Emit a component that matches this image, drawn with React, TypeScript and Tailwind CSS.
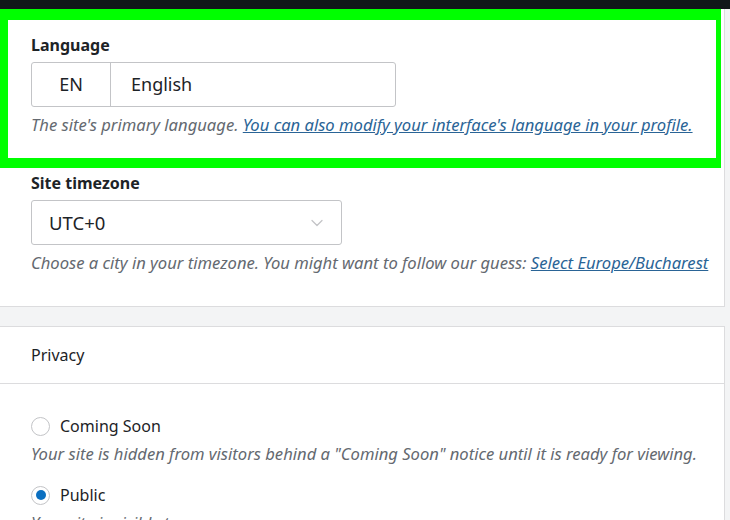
import { ChevronDown } from 'lucide-react';

// Site settings: general + privacy cards

const font = { fontFamily: '"Noto Sans", "Open Sans", sans-serif' };

function Radio({ checked }: { checked?: boolean }) {
  return (
    <span className="w-[19px] h-[19px] rounded-full border border-[#c3c4c7] bg-white flex items-center justify-center shrink-0">
      {checked && <span className="w-[10px] h-[10px] rounded-full bg-[#0b6fc0]" />}
    </span>
  );
}

export default function App() {
  return (
    <div className="w-[730px] h-[520px] overflow-hidden bg-[#f3f4f5] text-[#1d2327]" style={font}>
      {/* top bar */}
      <div className="h-[9px] bg-[#111719]" />

      {/* GENERAL CARD */}
      <section className="w-[725px] bg-white border-r border-b border-[#dcdcde]">
        {/* highlighted language block */}
        <div className="w-[721px] border-[#00ff00] border-l-[8px] border-t-[11px] border-r-[5px] border-b-[10px] pl-[23px] pt-[15px] h-[159px]">
          <div className="text-[16px] font-bold leading-5">Language</div>
          <div className="mt-[7px] flex w-[365px] h-[45px] border border-[#c3c4c7] rounded-[3px] text-[18px]">
            <div className="w-[79px] border-r border-[#c3c4c7] flex items-center justify-center">EN</div>
            <div className="flex items-center pl-[20px]">English</div>
          </div>
          <p className="mt-[8px] text-[16.6px] italic leading-5 text-[#646970]">
            The site's primary language.{' '}
            <a href="#" className="text-[#2a6496] underline">
              You can also modify your interface's language in your profile.
            </a>
          </p>
        </div>

        <div className="pl-[31px] pt-[5px] pb-[33px]">
          <div className="text-[16px] font-bold leading-5">Site timezone</div>
          <div className="mt-[7px] w-[311px] h-[45px] border border-[#c3c4c7] rounded-[3px] flex items-center justify-between pl-[17px] pr-[14px] text-[18.5px]">
            <span>UTC+0</span>
            <ChevronDown className="w-[20px] h-[20px] text-[#c3c4c7]" strokeWidth={1.5} />
          </div>
          <p className="mt-[8px] text-[16.6px] italic leading-5 text-[#646970]">
            Choose a city in your timezone. You might want to follow our guess:{' '}
            <a href="#" className="text-[#2a6496] underline">
              Select Europe/Bucharest
            </a>
          </p>
        </div>
      </section>

      {/* PRIVACY CARD */}
      <section className="mt-[19px] w-[725px] bg-white border-t border-r border-[#dcdcde]">
        <div className="h-[57px] pl-[31px] flex items-center border-b border-[#dcdcde] text-[16px]">
          Privacy
        </div>
        <div className="pl-[31px] pt-[30px]">
          <label className="flex items-center gap-[10px] text-[16px] leading-6">
            <Radio />
            Coming Soon
          </label>
          <p className="mt-[6px] text-[16.6px] italic leading-5 text-[#646970]">
            Your site is hidden from visitors behind a "Coming Soon" notice until it is ready for viewing.
          </p>
          <label className="mt-[19px] flex items-center gap-[10px] text-[16px] leading-6">
            <Radio checked />
            Public
          </label>
          <p className="mt-[6px] text-[16.6px] italic leading-5 text-[#646970]">
            Your site is visible to everyone.
          </p>
        </div>
      </section>
    </div>
  );
}
